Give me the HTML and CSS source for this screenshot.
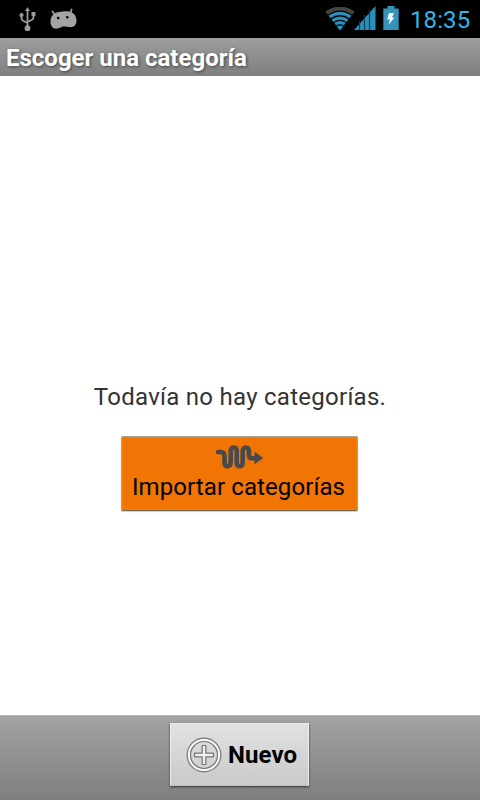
FILE: index.html
```html
<!DOCTYPE html>
<html lang="es">
<head>
<meta charset="utf-8">
<title>Escoger una categoría</title>
<link rel="stylesheet" href="styles.css">
</head>
<body>
<div class="status">
  <svg class="usb" width="18" height="26" viewBox="0 0 18 26" fill="none" stroke="#9b9b9b" stroke-width="1.800">
    <path d="M8.500 4V22M2.500 10V12.500Q2.500 14 4 14.800L8.500 17M14.500 8V11.500Q14.500 13 13 13.700L8.500 16"/>
    <path d="M8.500 1L11 5H6Z" fill="#9b9b9b" stroke="none"/>
    <circle cx="8.500" cy="22.200" r="2.900" fill="#9b9b9b" stroke="none"/>
    <circle cx="2.500" cy="9" r="2.100" fill="#9b9b9b" stroke="none"/>
    <path d="M12.500 6H16.500V10H12.500Z" fill="#9b9b9b" stroke="none"/>
  </svg>
  <svg class="droid" width="28" height="22" viewBox="0 0 28 22">
    <path d="M2.500 3.500L5.500 7.500M21.700 1.500L20 6" stroke="#a4a4a4" stroke-width="1.700" stroke-linecap="round"/>
    <path d="M0.500 13.500C0.500 8 4 4.500 9 4C13 3.300 16 3 19 3.600C23.500 4.500 26.500 8 26.500 12.500C26.500 17 24 19.200 20.500 19.200C17.500 19.200 16.500 18.500 14 18.500C11 18.500 10 20.700 6 20.700C2.500 20.700 0.500 17.500 0.500 13.500Z" fill="#a4a4a4"/>
    <circle cx="8.200" cy="10" r="1.300"/><circle cx="17.300" cy="9.300" r="1.300"/>
  </svg>
  <span class="spacer"></span>
  <svg class="wifi" width="30" height="24" viewBox="0 0 30 24" fill="none">
    <path d="M1.500 6.200Q15 -3.200 28.500 6.200" stroke="#444" stroke-width="4"/>
    <path d="M4.500 9.800Q15 2.800 25.500 9.800M7.500 13.600Q15 8.600 22.500 13.600M10.200 17.200Q15 14.200 19.800 17.200" stroke="#2b8fba" stroke-width="3.200"/>
    <path d="M11.700 19.500Q15 17.600 18.300 19.500L15 23.500Z" fill="#2b8fba"/>
  </svg>
  <svg class="signal" width="22" height="24" viewBox="0 0 22 24">
    <path d="M0 24L21.500 0V24Z" fill="#2b8fba"/>
    <path d="M5.500 15V24M10.500 9V24M15.500 4V24" stroke="#123c4e" stroke-width="1.200"/>
  </svg>
  <svg class="battery" width="16" height="24" viewBox="0 0 16 24">
    <path d="M4.500 0H11.500V2.500H15.700V24H0.300V2.500H4.500Z" fill="#3592b9"/>
    <path d="M6 7H11L9 11.500H11.500L5.500 19L7 13.500H4Z" fill="#f2fbff"/>
  </svg>
  <span class="clock">18:35</span>
</div>
<header class="title"><h1>Escoger una categoría</h1></header>
<main class="content">
  <p class="empty">Todavía no hay categorías.</p>
  <button class="import">
    <svg width="50" height="26" viewBox="0 0 50 26" fill="none" stroke="#4a4a4a" stroke-width="4.600">
      <path d="M3 8H5.500Q9.500 8 9.500 12V18Q9.500 22.300 12.600 22.300T15.700 18V7.500Q15.700 3.500 18.700 3.500T21.700 7.500V18Q21.700 22.300 24.700 22.300T27.700 18V7.500Q27.700 3.500 30.800 3.500T33.900 7.500V11Q33.900 14.200 37 14.200H41" stroke-linecap="round" stroke-linejoin="round"/>
      <path d="M39.500 7.800L48.300 14L39.500 20.300Z" fill="#4a4a4a" stroke="none"/>
    </svg>
    <span>Importar categorías</span>
  </button>
</main>
<footer class="bar">
  <button class="new">
    <svg width="36" height="36" viewBox="0 0 36 36" fill="none">
      <circle cx="18" cy="18" r="15.300" stroke="#f3f3f3" stroke-width="3"/>
      <circle cx="18" cy="18" r="16.900" stroke="#777" stroke-width="1.200"/>
      <circle cx="18" cy="18" r="13.500" stroke="#777" stroke-width="1.200"/>
      <path d="M16.200 8.500H19.800V16.200H27.500V19.800H19.800V27.500H16.200V19.800H8.500V16.200H16.200Z" fill="#eee" stroke="#777" stroke-width="1.200" stroke-linejoin="round"/>
    </svg>
    <span>Nuevo</span>
  </button>
</footer>
</body>
</html>
```

FILE: styles.css
```css
* { box-sizing: border-box; }
body {
  margin: 0;
  width: 480px;
  height: 800px;
  display: flex;
  flex-direction: column;
  overflow: hidden;
  background: #fff;
  font-family: Roboto, "Liberation Sans", sans-serif;
}
svg { display: block; flex: none; }
.status {
  height: 38px;
  flex: none;
  display: flex;
  align-items: flex-start;
  background: #000;
}
.usb { margin: 6px 0 0 19px; }
.droid { margin: 8px 0 0 12.5px; }
.spacer { flex: 1; }
.wifi { margin-top: 7px; }
.signal { margin: 6px 0 0 -1px; }
.battery { margin: 6px 0 0 7px; }
.clock {
  width: 61px;
  margin: 6px 9px 0 11px;
  color: #33b5e5;
  font-size: 24px;
  line-height: 28px;
  letter-spacing: 0.1px;
  white-space: nowrap;
}
.title {
  height: 38px;
  flex: none;
  padding-left: 6px;
  background: linear-gradient(#9d9d9d, #7f7f7f);
}
.title h1 {
  margin: 0;
  color: #fff;
  font-size: 24px;
  line-height: 41px;
  font-weight: 700;
  text-shadow: 1px 1px 3px #444;
}
.content {
  flex: 1;
  display: flex;
  flex-direction: column;
  align-items: center;
  padding-top: 306px;
}
.empty {
  margin: 0;
  color: #333;
  font-size: 24px;
  line-height: 30px;
  letter-spacing: 0.27px;
}
button {
  font-family: inherit;
  color: #000;
  padding: 0;
  white-space: nowrap;
}
.import {
  width: 237px;
  height: 75px;
  margin: 24px 1px 0 0;
  display: flex;
  flex-direction: column;
  align-items: center;
  padding-top: 7px;
  border: 1px solid #a9a08c;
  border-bottom-color: #75654a;
  border-radius: 2px;
  background: #f17505;
  box-shadow: inset 0 0 0 1px #f57f08, 0 1px 1px #ccc;
  font-size: 24px;
  line-height: 30px;
  letter-spacing: 0.1px;
}
.import span { margin: 2px 2px 0 0; }
.bar {
  height: 85px;
  flex: none;
  display: flex;
  justify-content: center;
  align-items: flex-start;
  padding-top: 7px;
  border-top: 1px solid #b5b5b5;
  background: linear-gradient(#a3a3a3, #7e7e7e);
}
.new {
  width: 139px;
  height: 63px;
  margin-right: 1px;
  display: flex;
  align-items: center;
  padding-left: 15px;
  border: 1px solid #ededed;
  border-bottom-color: #c0c0c0;
  background: linear-gradient(#e1e1e1, #cacaca);
  box-shadow: 0 1px 2px #333;
  font-size: 24px;
  font-weight: 700;
}
.new span { margin: 0 0 0 6px; letter-spacing: 0.1px; }
```
